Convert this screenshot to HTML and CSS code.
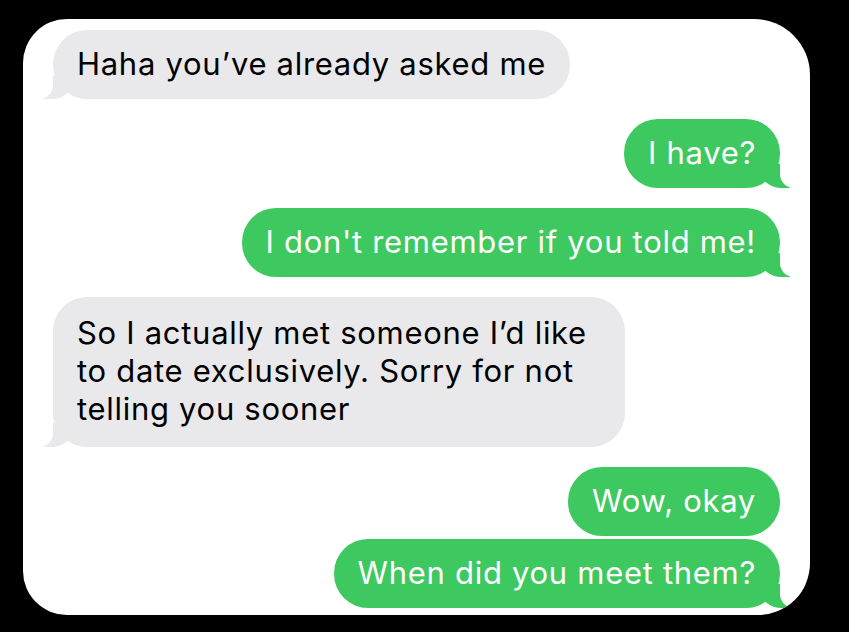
FILE: index.html
```html
<!DOCTYPE html>
<html lang="en">
<head>
	<meta charset="UTF-8">
	<title>Messages</title>
	<link rel="stylesheet" href="styles.css">
</head>
<body>
	<div class="card">
		<div class="bubble them">Haha you’ve already asked me</div>
		<div class="bubble me">I have?</div>
		<div class="bubble me">I don't remember if you told me!</div>
		<div class="bubble them wide">So I actually met someone I’d like<br>to date exclusively. Sorry for not<br>telling you sooner</div>
		<div class="bubble me notail">Wow, okay</div>
		<div class="bubble me next">When did you meet them?</div>
	</div>
</body>
</html>
```

FILE: styles.css
```css
html, body { margin:0;background:#000; }
body { width:849px;height:632px;overflow:hidden;font-family:Inter,"Liberation Sans",sans-serif; }

.card { margin:19px 0 0 23px;width:787px;height:596px;box-sizing:border-box;padding:11px 30px 0;
	background:#fff;border-radius:44px 56px 52px 44px;overflow:hidden;isolation:isolate;
	display:flex;flex-direction:column;align-items:flex-start;gap:20px; }

.bubble { position:relative;padding:15px 24px 16px;border-radius:34px;
	font-size:31px;line-height:38px;letter-spacing:0.7px; }
.bubble::before,
.bubble::after { content:"";position:absolute;bottom:0;height:24px;z-index:-1; }

.them { background:#e9e9eb;color:#000; }
.them::before { left:-10px;width:30px;background:#e9e9eb;border-bottom-right-radius:22px 18px; }
.them::after { left:-36px;width:36px;background:#fff;border-bottom-right-radius:14px; }
.wide { padding:17px 38px 19px 24px; }

.me { align-self:flex-end;background:#3dc860;color:#fff; }
.me::before { right:-10px;width:30px;background:#3dc860;border-bottom-left-radius:22px 18px; }
.me::after { right:-36px;width:36px;background:#fff;border-bottom-left-radius:14px; }

.notail::before,
.notail::after { display:none; }
.next { margin-top:-17px; }
```
